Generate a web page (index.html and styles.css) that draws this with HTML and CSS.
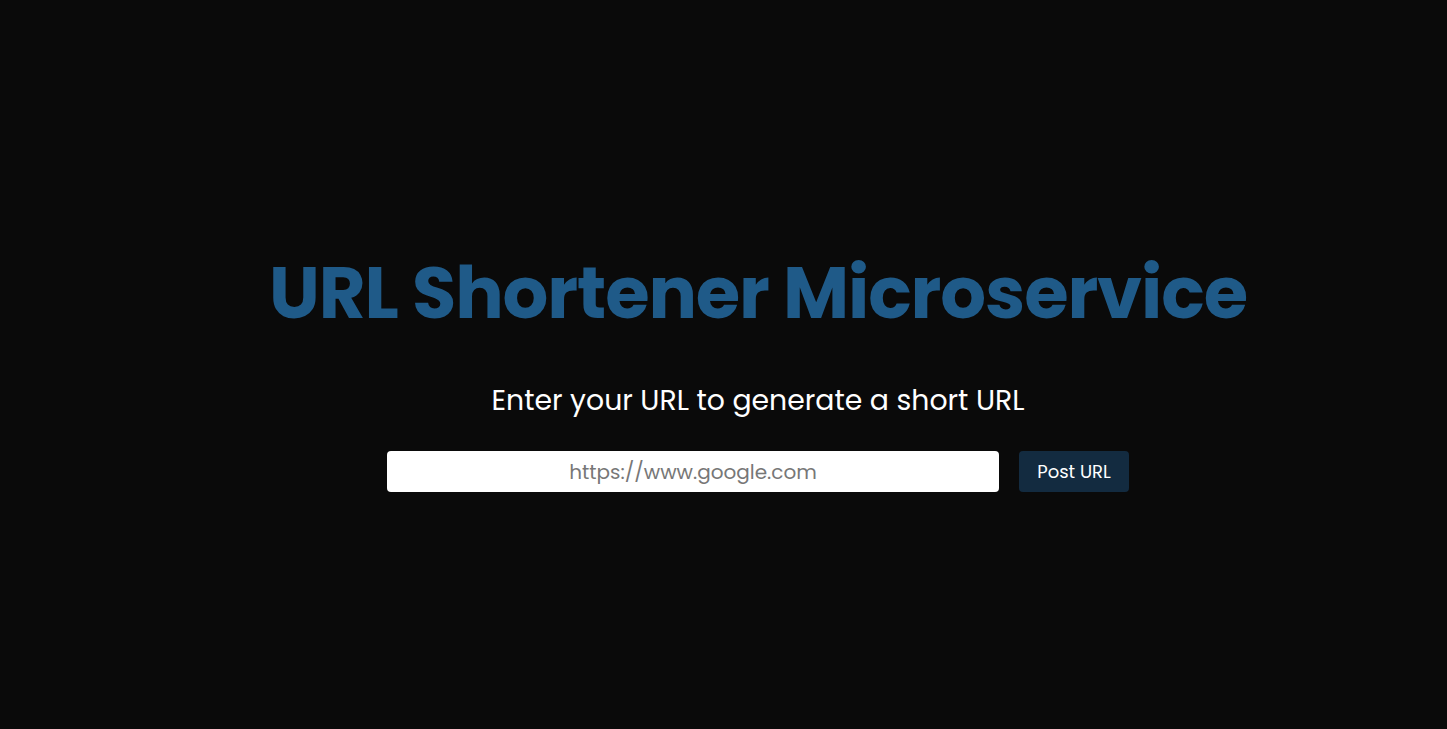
FILE: index.html
```html
<!DOCTYPE html>
<html lang="en">
<head>
<meta charset="utf-8">
<title>URL Shortener Microservice</title>
<link rel="stylesheet" href="styles.css">
</head>
<body>
<main class="page">
  <h1 class="title">URL Shortener Microservice</h1>
  <p class="subtitle">Enter your URL to generate a short URL</p>
  <form class="url-form">
    <input class="url-input" type="text" placeholder="https://www.google.com">
    <button class="post-btn" type="button">Post URL</button>
  </form>
</main>
</body>
</html>
```
FILE: styles.css
```css
html, body {
  margin: 0;
  padding: 0;
  background: #0a0a0a;
}
body {
  font-family: "Poppins", "Inter", "Noto Sans", sans-serif;
  color: #ffffff;
}
.page {
  min-height: 100vh;
  box-sizing: border-box;
  display: flex;
  flex-direction: column;
  align-items: center;
  justify-content: center;
  padding-left: 69px;
  padding-top: 13px;
}
.title {
  margin: 0;
  font-size: 72px;
  font-weight: 700;
  letter-spacing: -1.1px;
  color: #1f5a88;
  line-height: 1.2;
}
.subtitle {
  margin: 46px 0 0;
  font-size: 28.3px;
  font-weight: 400;
  line-height: 1.3;
}
.url-form {
  margin-top: 32px;
  display: flex;
  gap: 20px;
}
.url-input {
  width: 612px;
  height: 41px;
  box-sizing: border-box;
  border: none;
  border-radius: 4px;
  background: #ffffff;
  text-align: center;
  font-family: inherit;
  font-size: 20px;
  color: #333;
  outline: none;
}
.url-input::placeholder {
  color: #777777;
}
.post-btn {
  width: 110px;
  height: 41px;
  border: none;
  border-radius: 4px;
  background: #132b40;
  color: #ffffff;
  font-family: inherit;
  font-size: 18px;
  cursor: pointer;
}
```
